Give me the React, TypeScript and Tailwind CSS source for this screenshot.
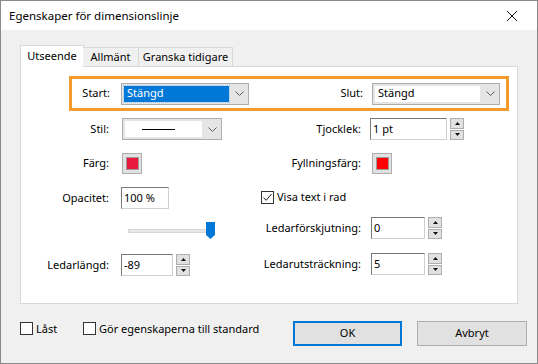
import React from 'react';

function Chevron() {
  return (
    <svg width="9" height="5" viewBox="0 0 9 5">
      <path d="M0.5 0.5 L4.5 4.5 L8.5 0.5" fill="none" stroke="#5a5a5a" strokeWidth="1" />
    </svg>
  );
}

function Combo({ className, active, children }: { className: string; active?: boolean; children: React.ReactNode }) {
  return (
    <div className={`flex h-[22px] border border-[#adadad] bg-[#e5e5e5] ${className}`}>
      <div className="flex flex-1 p-[2px]">
        <div className={`flex flex-1 items-center pl-[3px] ${active ? 'bg-[#0078d7] text-white outline-1 outline-dotted outline-[#9cc8f0]' : 'bg-white'}`}>
          {children}
        </div>
      </div>
      <div className="flex w-[17px] items-center justify-center">
        <Chevron />
      </div>
    </div>
  );
}

function SpinBtn({ up }: { up?: boolean }) {
  return (
    <div className="flex flex-1 items-center justify-center border border-[#adadad] bg-[#e1e1e1]">
      <svg width="5" height="3" viewBox="0 0 5 3">
        <path d={up ? 'M0 3 L2.5 0 L5 3 Z' : 'M0 0 L5 0 L2.5 3 Z'} fill="#111" />
      </svg>
    </div>
  );
}

function Spin({ value, className }: { value: string; className: string }) {
  return (
    <div className="flex items-center gap-[3px]">
      <div className={`flex h-[22px] items-center border border-t-[#7a7a7a] border-l-[#7a7a7a] border-r-[#cfcfcf] border-b-[#cfcfcf] bg-white pl-[2px] ${className}`}>
        {value}
      </div>
      <div className="flex h-[22px] w-[14px] flex-col gap-[1px]">
        <SpinBtn up />
        <SpinBtn />
      </div>
    </div>
  );
}

function Swatch({ color }: { color: string }) {
  return (
    <div className="flex h-[21px] w-[20px] items-center justify-center border border-[#adadad] bg-[#e1e1e1]">
      <div className="h-[13px] w-[13px] border border-[#9a9a9a]" style={{ backgroundColor: color }} />
    </div>
  );
}

function Check({ checked }: { checked?: boolean }) {
  return (
    <div className="flex h-[13px] w-[13px] shrink-0 items-center justify-center border border-[#333] bg-white">
      {checked && (
        <svg width="11" height="11" viewBox="0 0 11 11">
          <path d="M1.5 5.5 L4.2 8.3 L9.5 2" fill="none" stroke="#222" strokeWidth="1" />
        </svg>
      )}
    </div>
  );
}

export default function App() {
  return (
    <div className="font-['Noto_Sans',sans-serif] text-[11px] text-black">
      <div className="flex h-[364px] w-[538px] flex-col border border-[#8a8a8a] bg-[#f0f0f0]">
        {/* title bar */}
        <div className="flex h-[29px] shrink-0 items-center justify-between bg-white pl-[8px] pr-[20px] text-[11.5px]">
          <span>Egenskaper för dimensionslinje</span>
          <svg width="10" height="10" viewBox="0 0 10 10">
            <path d="M0 0 L10 10 M10 0 L0 10" stroke="#111" strokeWidth="1" />
          </svg>
        </div>

        <div className="flex flex-1 flex-col px-[19px] pt-[15px]">
          {/* tabs */}
          <div className="relative z-10 flex h-[22px] items-end">
            <div className="flex h-[22px] w-[64px] items-center justify-center border border-b-0 border-[#d9d9d9] bg-white">Utseende</div>
            <div className="-ml-px mb-[1px] flex h-[19px] w-[56px] items-center justify-center border border-b-0 border-l-0 border-[#d9d9d9] bg-[#f0f0f0]">Allmänt</div>
            <div className="-ml-px mb-[1px] flex h-[19px] w-[95px] items-center justify-center border border-b-0 border-[#d9d9d9] bg-[#f0f0f0]">Granska tidigare</div>
          </div>

          {/* panel */}
          <div className="-mt-px h-[238px] w-[498px] border border-[#d9d9d9] bg-white">
            <div className="ml-[48px] mt-[9px] flex h-[35px] w-[440px] items-center border-[3px] border-[#f39b2b]">
              <div className="w-[38px] text-right">Start:</div>
              <Combo className="ml-[11px] w-[128px]" active>Stängd</Combo>
              <div className="w-[114px] text-right">Slut:</div>
              <Combo className="ml-[9px] w-[128px]">Stängd</Combo>
            </div>

            <div className="flex">
              {/* left column */}
              <div className="flex w-[229px] flex-col">
                <div className="flex h-[36px] items-center">
                  <div className="w-[88px] text-right">Stil:</div>
                  <Combo className="ml-[13px] w-[100px]">
                    <div className="ml-[14px] h-px w-[33px] bg-black" />
                  </Combo>
                </div>
                <div className="flex h-[32px] items-center">
                  <div className="w-[88px] text-right">Färg:</div>
                  <div className="ml-[13px]">
                    <Swatch color="#e8193c" />
                  </div>
                </div>
                <div className="flex h-[38px] items-center">
                  <div className="w-[88px] text-right">Opacitet:</div>
                  <div className="ml-[12px] flex h-[22px] w-[48px] items-center border border-t-[#7a7a7a] border-l-[#7a7a7a] border-r-[#cfcfcf] border-b-[#cfcfcf] bg-white pl-[2px]">
                    100 %
                  </div>
                </div>
                <div className="flex h-[28px] items-center">
                  <div className="relative ml-[107px] h-[4px] w-[86px] border border-[#d6d6d6] bg-[#e7e7e7]">
                    <svg className="absolute left-[77px] top-[-8px]" width="9" height="17" viewBox="0 0 9 17">
                      <path d="M0 0 H9 V13 L4.5 17 L0 13 Z" fill="#0078d7" />
                    </svg>
                  </div>
                </div>
                <div className="flex h-[40px] items-center">
                  <div className="w-[88px] text-right">Ledarlängd:</div>
                  <div className="ml-[12px]">
                    <Spin value="-89" className="w-[52px]" />
                  </div>
                </div>
              </div>

              {/* right column */}
              <div className="flex flex-1 flex-col">
                <div className="flex h-[36px] items-center">
                  <div className="w-[111px] text-right">Tjocklek:</div>
                  <div className="ml-[9px]">
                    <Spin value="1 pt" className="w-[77px]" />
                  </div>
                </div>
                <div className="flex h-[32px] items-center">
                  <div className="w-[111px] text-right">Fyllningsfärg:</div>
                  <div className="ml-[11px]">
                    <Swatch color="#ff0000" />
                  </div>
                </div>
                <div className="flex h-[36px] items-center">
                  <div className="ml-[11px] flex items-center gap-[3px]">
                    <Check checked />
                    <span>Visa text i rad</span>
                  </div>
                </div>
                <div className="flex h-[26px] items-center">
                  <div className="w-[111px] text-right">Ledarförskjutning:</div>
                  <div className="ml-[10px]">
                    <Spin value="0" className="w-[54px]" />
                  </div>
                </div>
                <div className="flex h-[46px] items-center">
                  <div className="w-[111px] text-right">Ledarutsträckning:</div>
                  <div className="ml-[10px]">
                    <Spin value="5" className="w-[54px]" />
                  </div>
                </div>
              </div>
            </div>
          </div>

          {/* bottom row */}
          <div className="mt-[17px] flex items-start">
            <div className="mt-[1px] flex w-[63px] shrink-0 items-center gap-[3px]">
              <Check />
              <span className="leading-[13px]">Låst</span>
            </div>
            <div className="mt-[1px] flex w-[210px] shrink-0 items-center gap-[3px]">
              <Check />
              <span className="leading-[13px]">Gör egenskaperna till standard</span>
            </div>
            <div className="flex h-[25px] w-[109px] shrink-0 items-center justify-center border-2 border-[#0078d7] bg-[#e1e1e1]">OK</div>
            <div className="ml-[15px] flex h-[25px] w-[110px] shrink-0 items-center justify-center border border-[#adadad] bg-[#e1e1e1]">Avbryt</div>
          </div>
        </div>
      </div>
    </div>
  );
}
